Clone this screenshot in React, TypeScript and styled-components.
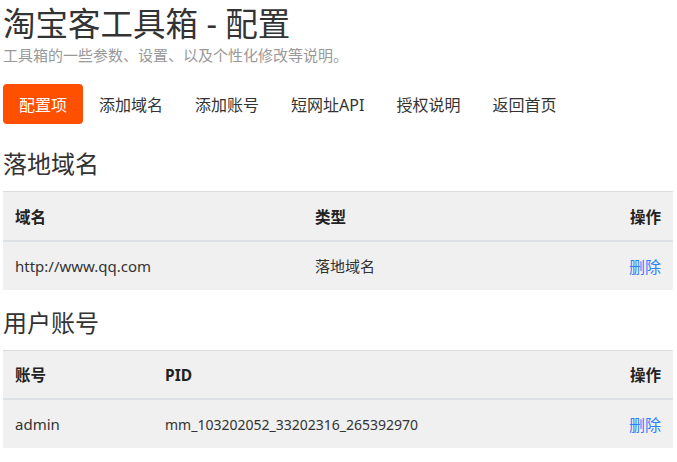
import React from "react";
import styled, { createGlobalStyle } from "styled-components";

const GlobalStyle = createGlobalStyle`
  html, body { margin: 0; padding: 0; background: #fff; }
  body {
    font-family: "Noto Sans", "Noto Sans CJK SC", sans-serif;
    color: #333;
  }
  * { box-sizing: border-box; }
`;

const Page = styled.div`
  padding: 0 4px 0 3px;
  width: 677px;
`;

const Title = styled.h1`
  margin: 0;
  font-size: 32.5px;
  font-weight: 400;
  line-height: 47px;
  color: #333;
`;

const Subtitle = styled.p`
  margin: -2px 0 0;
  font-size: 15px;
  line-height: 20px;
  color: #999;
`;

const Nav = styled.nav`
  display: flex;
  margin-top: 19px;
`;

const NavItem = styled.a<{ $active?: boolean }>`
  display: flex;
  align-items: center;
  height: 40px;
  padding: 0 16px;
  font-size: 16px;
  border-radius: 4px;
  text-decoration: none;
  color: ${(p) => (p.$active ? "#fff" : "#333")};
  background: ${(p) => (p.$active ? "#ff5000" : "transparent")};
`;

const SectionTitle = styled.h2`
  margin: 0;
  font-size: 24px;
  font-weight: 400;
  line-height: 32px;
  color: #333;
`;

const FirstSection = styled.section`
  margin-top: 24px;
`;

const Section = styled.section`
  margin-top: 17px;
`;

const Table = styled.table`
  width: 670px;
  margin-top: 11px;
  border-collapse: collapse;
  background: #f0f0f0;
  font-size: 15px;
  table-layout: fixed;
`;

const Th = styled.th<{ $right?: boolean; $w?: number }>`
  text-align: ${(p) => (p.$right ? "right" : "left")};
  width: ${(p) => (p.$w ? `${p.$w}px` : "auto")};
  font-weight: 700;
  font-size: 15.5px;
  padding: 1px 12px 0;
  height: 49px;
  border-top: 1px solid #dcdcdc;
  border-bottom: 2px solid #dee2e6;
  color: #222;
`;

const Td = styled.td<{ $right?: boolean; $compact?: boolean }>`
  text-align: ${(p) => (p.$right ? "right" : "left")};
  font-size: ${(p) => (p.$compact ? "14px" : "15px")};
  padding: 0 12px;
  height: 49px;
  color: #333;
`;

const DeleteLink = styled.a`
  color: #2f7fff;
  font-size: 16px;
  text-decoration: none;
  cursor: pointer;
`;

const navItems = ["配置项", "添加域名", "添加账号", "短网址API", "授权说明", "返回首页"];

export default function App() {
  return (
    <Page>
      <GlobalStyle />
      <Title>淘宝客工具箱 - 配置</Title>
      <Subtitle>工具箱的一些参数、设置、以及个性化修改等说明。</Subtitle>
      <Nav>
        {navItems.map((n, i) => (
          <NavItem key={n} $active={i === 0}>
            {n}
          </NavItem>
        ))}
      </Nav>
      <FirstSection>
        <SectionTitle>落地域名</SectionTitle>
        <Table>
          <thead>
            <tr>
              <Th $w={300}>域名</Th>
              <Th>类型</Th>
              <Th $right $w={100}>操作</Th>
            </tr>
          </thead>
          <tbody>
            <tr>
              <Td>http://www.qq.com</Td>
              <Td>落地域名</Td>
              <Td $right>
                <DeleteLink>删除</DeleteLink>
              </Td>
            </tr>
          </tbody>
        </Table>
      </FirstSection>
      <Section>
        <SectionTitle>用户账号</SectionTitle>
        <Table>
          <thead>
            <tr>
              <Th $w={150}>账号</Th>
              <Th>PID</Th>
              <Th $right $w={100}>操作</Th>
            </tr>
          </thead>
          <tbody>
            <tr>
              <Td>admin</Td>
              <Td $compact>mm_103202052_33202316_265392970</Td>
              <Td $right>
                <DeleteLink>删除</DeleteLink>
              </Td>
            </tr>
          </tbody>
        </Table>
      </Section>
    </Page>
  );
}
